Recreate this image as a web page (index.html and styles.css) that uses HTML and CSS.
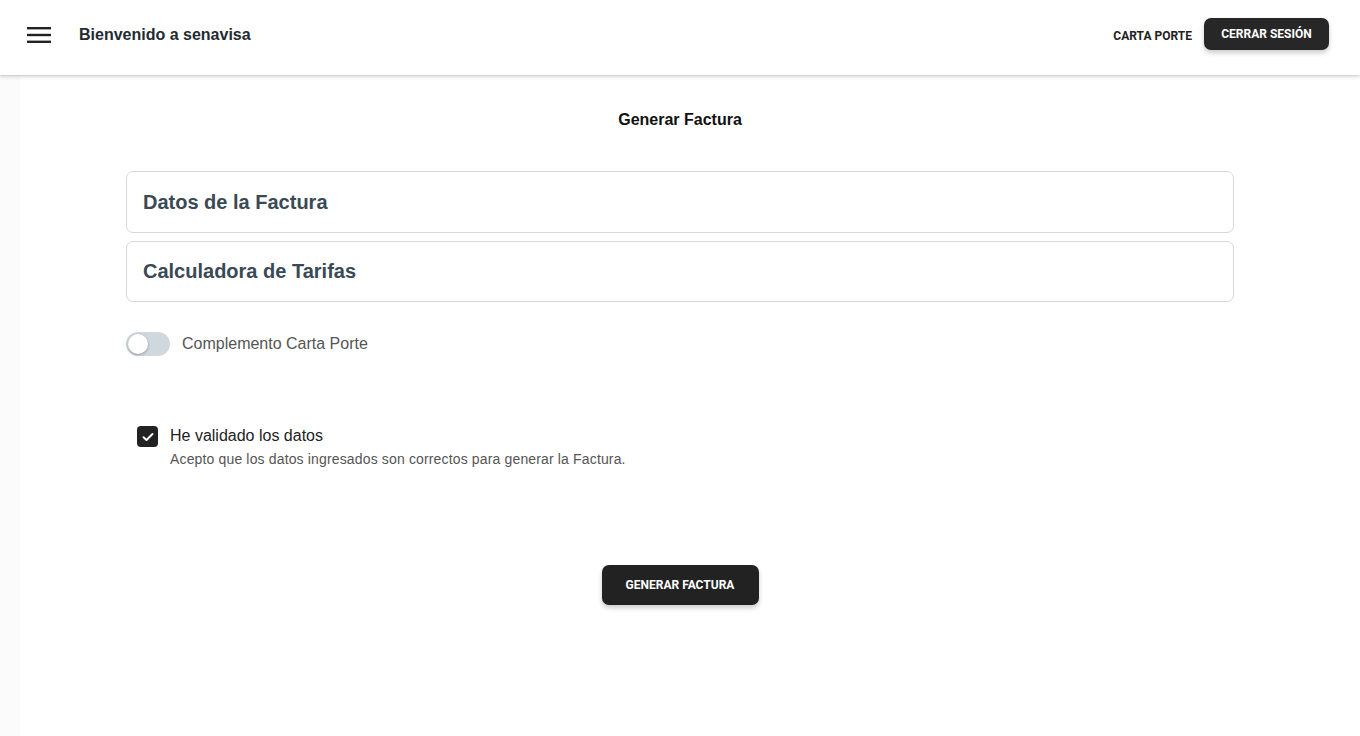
FILE: index.html
```html
<!DOCTYPE html>
<html lang="es">
<head>
<meta charset="utf-8">
<title>Generar Factura</title>
<link rel="stylesheet" href="styles.css">
</head>
<body>
<header class="topbar">
  <button class="menu-btn" aria-label="menu">
    <svg width="24" height="18" viewBox="0 0 24 18"><rect x="0" y="1" width="24" height="2.4" fill="#222"/><rect x="0" y="7.8" width="24" height="2.4" fill="#222"/><rect x="0" y="14.6" width="24" height="2.4" fill="#222"/></svg>
  </button>
  <div class="brand">Bienvenido a senavisa</div>
  <div class="spacer"></div>
  <button class="text-btn">CARTA PORTE</button>
  <button class="dark-btn">CERRAR SESIÓN</button>
</header>
<div class="layout">
  <aside class="rail"></aside>
  <main class="main">
    <h1 class="page-title">Generar Factura</h1>
    <div class="panels">
      <section class="panel"><h2>Datos de la Factura</h2></section>
      <section class="panel"><h2>Calculadora de Tarifas</h2></section>
    </div>
    <label class="toggle-row">
      <span class="switch"><span class="thumb"></span></span>
      <span class="toggle-label">Complemento Carta Porte</span>
    </label>
    <div class="check-row">
      <span class="checkbox">
        <svg width="12" height="10" viewBox="0 0 12 10"><path d="M1.5 5.2 L4.5 8 L10.5 2" fill="none" stroke="#fff" stroke-width="2" stroke-linecap="round" stroke-linejoin="round"/></svg>
      </span>
      <div class="check-text">
        <div class="check-label">He validado los datos</div>
        <div class="check-desc">Acepto que los datos ingresados son correctos para generar la Factura.</div>
      </div>
    </div>
    <div class="actions">
      <button class="dark-btn big">GENERAR FACTURA</button>
    </div>
  </main>
</div>
</body>
</html>
```
FILE: styles.css
```css
* { box-sizing: border-box; }
html, body { margin: 0; padding: 0; }
body {
  font-family: "Liberation Sans", Arial, sans-serif;
  background: #fff;
  color: #222;
  height: 736px;
  overflow: hidden;
}
.topbar {
  height: 75px;
  display: flex;
  align-items: center;
  padding: 0 31px 5px 27px;
  background: #fff;
  box-shadow: 0 2px 4px rgba(0,0,0,0.14), 0 1px 1px rgba(0,0,0,0.06);
  position: relative;
  z-index: 2;
}
.menu-btn {
  border: 0;
  background: none;
  padding: 0;
  width: 24px;
  height: 18px;
  display: flex;
}
.brand {
  margin-left: 28px;
  font-size: 16px;
  font-weight: 700;
  color: #232a30;
}
.spacer { flex: 1; }
.text-btn {
  border: 0;
  background: none;
  font-family: Roboto, "Liberation Sans", sans-serif;
  font-weight: 700;
  font-size: 12px;
  color: #222;
  padding: 0;
  margin-right: 12px;
  margin-top: 1px;
}
.dark-btn {
  border: 0;
  background: #272727;
  color: #fff;
  font-family: Roboto, "Liberation Sans", sans-serif;
  font-weight: 700;
  font-size: 12px;
  height: 32px;
  width: 125px;
  padding: 0;
  border-radius: 7px;
  box-shadow: 0 3px 5px rgba(0,0,0,0.2);
  margin-top: -3px;
}
.layout {
  display: flex;
  height: 661px;
}
.rail {
  width: 20px;
  background: #fbfbfb;
  flex: none;
}
.main {
  flex: 1;
  padding: 0 126px 0 106px;
  background: #fff;
}
.page-title {
  margin: 36px 0 0;
  text-align: center;
  font-size: 16px;
  font-weight: 700;
  color: #111;
  line-height: 18px;
}
.panels {
  margin-top: 42px;
  display: flex;
  flex-direction: column;
  gap: 8px;
}
.panel {
  border: 1px solid #d6d9dc;
  border-radius: 7px;
  height: 62px;
  display: flex;
  align-items: center;
  padding: 0 16px;
}
.panel + .panel { height: 61px; }
.panel h2 {
  margin: 0;
  font-size: 20px;
  font-weight: 700;
  color: #3a4a55;
}
.toggle-row {
  display: flex;
  align-items: center;
  margin-top: 30px;
  gap: 12px;
}
.switch {
  width: 44px;
  height: 24px;
  border-radius: 12px;
  background: #cfd8dd;
  position: relative;
  flex: none;
}
.thumb {
  position: absolute;
  left: 2px;
  top: 2px;
  width: 20px;
  height: 20px;
  border-radius: 50%;
  background: #fff;
  box-shadow: 0 1px 3px rgba(0,0,0,0.3);
}
.toggle-label {
  font-size: 16px;
  color: #555;
}
.check-row {
  display: flex;
  margin-top: 70px;
  padding-left: 11px;
  gap: 12px;
}
.checkbox {
  width: 21px;
  height: 21px;
  border-radius: 4px;
  background: #222;
  display: flex;
  align-items: center;
  justify-content: center;
  flex: none;
}
.check-label {
  font-size: 16px;
  color: #222;
  line-height: 20px;
}
.check-desc {
  margin-top: 5px;
  font-size: 14px;
  letter-spacing: 0.15px;
  color: #555;
  line-height: 16px;
}
.actions {
  display: flex;
  justify-content: center;
  margin-top: 98px;
}
.dark-btn.big {
  height: 40px;
  width: 157px;
  margin-top: 0;
  padding: 0;
  background: #222;
  border-radius: 7px;
}
```
